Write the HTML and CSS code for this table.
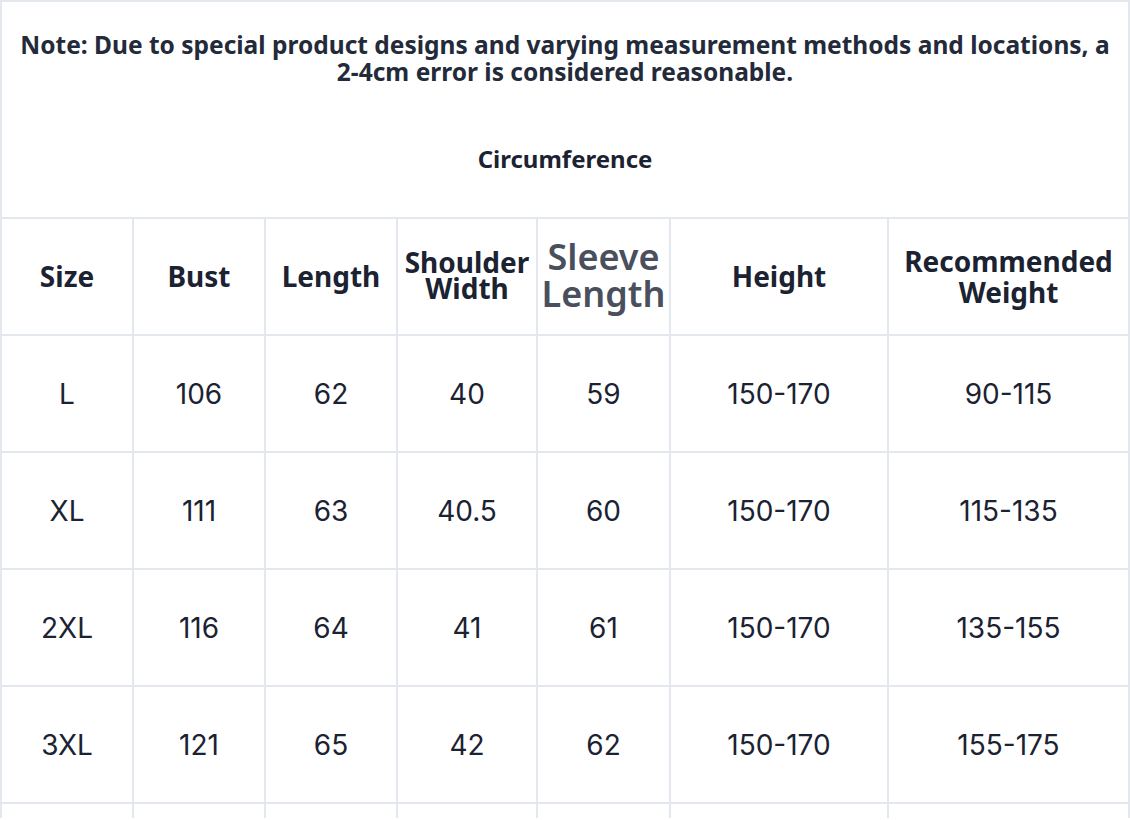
FILE: index.html
```html
<!DOCTYPE html>
<html lang="en">
<head>
<meta charset="utf-8">
<title>Size Chart</title>
<link rel="stylesheet" href="styles.css">
</head>
<body>
<div class="chart">
  <div class="intro">
    <p class="note">Note: Due to special product designs and varying measurement methods and locations, a<br>2-4cm error is considered reasonable.</p>
    <p class="section-title">Circumference</p>
  </div>
  <div class="grid">
    <div class="cell head">Size</div>
    <div class="cell head">Bust</div>
    <div class="cell head">Length</div>
    <div class="cell head small">Shoulder<br>Width</div>
    <div class="cell head big">Sleeve<br>Length</div>
    <div class="cell head">Height</div>
    <div class="cell head mid">Recommended<br>Weight</div>

    <div class="cell">L</div><div class="cell">106</div><div class="cell">62</div><div class="cell">40</div><div class="cell">59</div><div class="cell">150-170</div><div class="cell">90-115</div>
    <div class="cell">XL</div><div class="cell">111</div><div class="cell">63</div><div class="cell">40.5</div><div class="cell">60</div><div class="cell">150-170</div><div class="cell">115-135</div>
    <div class="cell">2XL</div><div class="cell">116</div><div class="cell">64</div><div class="cell">41</div><div class="cell">61</div><div class="cell">150-170</div><div class="cell">135-155</div>
    <div class="cell">3XL</div><div class="cell">121</div><div class="cell">65</div><div class="cell">42</div><div class="cell">62</div><div class="cell">150-170</div><div class="cell">155-175</div>

    <div class="cell tail"></div><div class="cell tail"></div><div class="cell tail"></div><div class="cell tail"></div><div class="cell tail"></div><div class="cell tail"></div><div class="cell tail"></div>
  </div>
</div>
</body>
</html>
```

FILE: styles.css
```css
* { box-sizing: border-box; }
html, body { margin: 0; padding: 0; background: #ffffff; }
body { width: 1130px; height: 820px; overflow: hidden; }

.chart {
  width: 1130px;
  border: 2px solid #e3e8ee;
  border-bottom: none;
  background: #e3e8ee;
  color: #1b2232;
  font-family: "Noto Sans", "Open Sans", sans-serif;
}

.intro {
  background: #ffffff;
  height: 215px;
  display: flex;
  flex-direction: column;
  align-items: center;
  padding-top: 29px;
}

.note {
  margin: 0;
  font-weight: 700;
  font-size: 24.5px;
  line-height: 27px;
  text-align: center;
  color: #232a3a;
  white-space: nowrap;
}

.section-title {
  margin: 58px 0 0;
  font-weight: 700;
  font-size: 24px;
  line-height: 32px;
}

.grid {
  margin-top: 2px;
  display: grid;
  grid-template-columns: 130px 130px 130px 138px 131px 216px 239px;
  grid-template-rows: 115px 115px 115px 115px 115px 14px;
  gap: 2px;
}

.cell {
  background: #ffffff;
  display: flex;
  align-items: center;
  justify-content: center;
  text-align: center;
  font-family: "Inter", "Noto Sans", sans-serif;
  font-weight: 400;
  font-size: 28px;
  color: #1b2232;
}

.cell.head {
  font-family: "Noto Sans", sans-serif;
  font-weight: 700;
  font-size: 28px;
  line-height: 1.2;
}

.cell.head.small { font-size: 28px; line-height: 26px; padding-bottom: 4px; }
.cell.head.big { font-size: 36px; line-height: 37px; font-weight: 600; color: #4a4f5d; padding-bottom: 4px; }
.cell.head.mid { font-size: 28px; line-height: 31px; }
```
